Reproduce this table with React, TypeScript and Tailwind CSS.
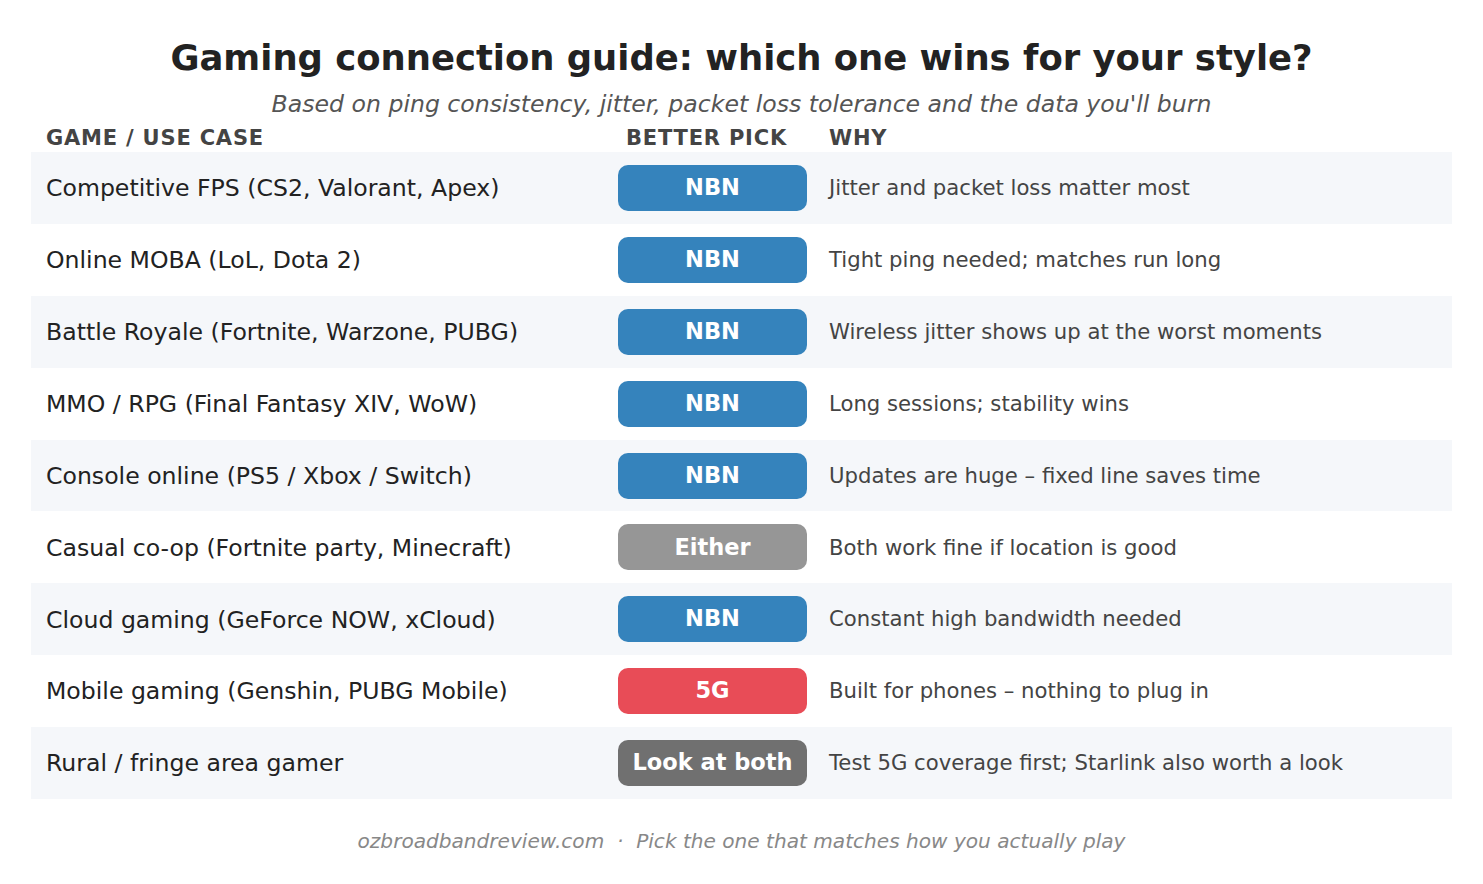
const rows = [
  { game: "Competitive FPS (CS2, Valorant, Apex)", pick: "NBN", why: "Jitter and packet loss matter most" },
  { game: "Online MOBA (LoL, Dota 2)", pick: "NBN", why: "Tight ping needed; matches run long" },
  { game: "Battle Royale (Fortnite, Warzone, PUBG)", pick: "NBN", why: "Wireless jitter shows up at the worst moments" },
  { game: "MMO / RPG (Final Fantasy XIV, WoW)", pick: "NBN", why: "Long sessions; stability wins" },
  { game: "Console online (PS5 / Xbox / Switch)", pick: "NBN", why: "Updates are huge \u2013 fixed line saves time" },
  { game: "Casual co-op (Fortnite party, Minecraft)", pick: "Either", why: "Both work fine if location is good" },
  { game: "Cloud gaming (GeForce NOW, xCloud)", pick: "NBN", why: "Constant high bandwidth needed" },
  { game: "Mobile gaming (Genshin, PUBG Mobile)", pick: "5G", why: "Built for phones \u2013 nothing to plug in" },
  { game: "Rural / fringe area gamer", pick: "Look at both", why: "Test 5G coverage first; Starlink also worth a look" },
];

const pillColor: Record<string, string> = {
  NBN: "bg-[#3583bc]",
  Either: "bg-[#969696]",
  "5G": "bg-[#e84c57]",
  "Look at both": "bg-[#707070]",
};

const App = () => {
  return (
    <div className="w-[1483px] h-[884px] bg-white font-['DejaVu_Sans',sans-serif] flex flex-col">
      <div className="h-[86px] pt-[30px] flex items-center justify-center">
        <h1 className="text-[35.4px] font-bold text-[#222222] leading-none">
          Gaming connection guide: which one wins for your style?
        </h1>
      </div>
      <div className="h-[36px] pt-[2px] flex items-center justify-center">
        <p className="text-[23.6px] italic text-[#555555] leading-none">
          Based on ping consistency, jitter, packet loss tolerance and the data you'll burn
        </p>
      </div>
      <div className="h-[30px] pt-[2px] mx-[31px] grid grid-cols-[587px_189px_1fr] items-center text-[21px] font-bold text-[#444444] tracking-[0.8px] leading-none">
        <div className="pl-[15px]">GAME / USE CASE</div>
        <div className="text-center pr-3">BETTER PICK</div>
        <div className="pl-[22px]">WHY</div>
      </div>
      <div className="mx-[31px] flex flex-col">
        {rows.map((r, i) => (
          <div
            key={r.game}
            className={
              "h-[71.9px] grid grid-cols-[587px_189px_1fr] items-center " +
              (i % 2 === 0 ? "bg-[#f5f7fa]" : "bg-white")
            }
          >
            <div className="pl-[15px] pt-[2px] text-[23.6px] text-[#222222]">{r.game}</div>
            <div
              className={
                "h-[46px] rounded-[10px] flex items-center justify-center text-white font-bold text-[22.5px] " +
                pillColor[r.pick]
              }
            >
              {r.pick}
            </div>
            <div className="pl-[22px] text-[21.2px] text-[#444444]">{r.why}</div>
          </div>
        ))}
      </div>
      <div className="flex-1 flex items-center justify-center">
        <p className="text-[20.1px] italic text-[#888888]">
          ozbroadbandreview.com &nbsp;·&nbsp; Pick the one that matches how you actually play
        </p>
      </div>
    </div>
  );
};

export default App;
